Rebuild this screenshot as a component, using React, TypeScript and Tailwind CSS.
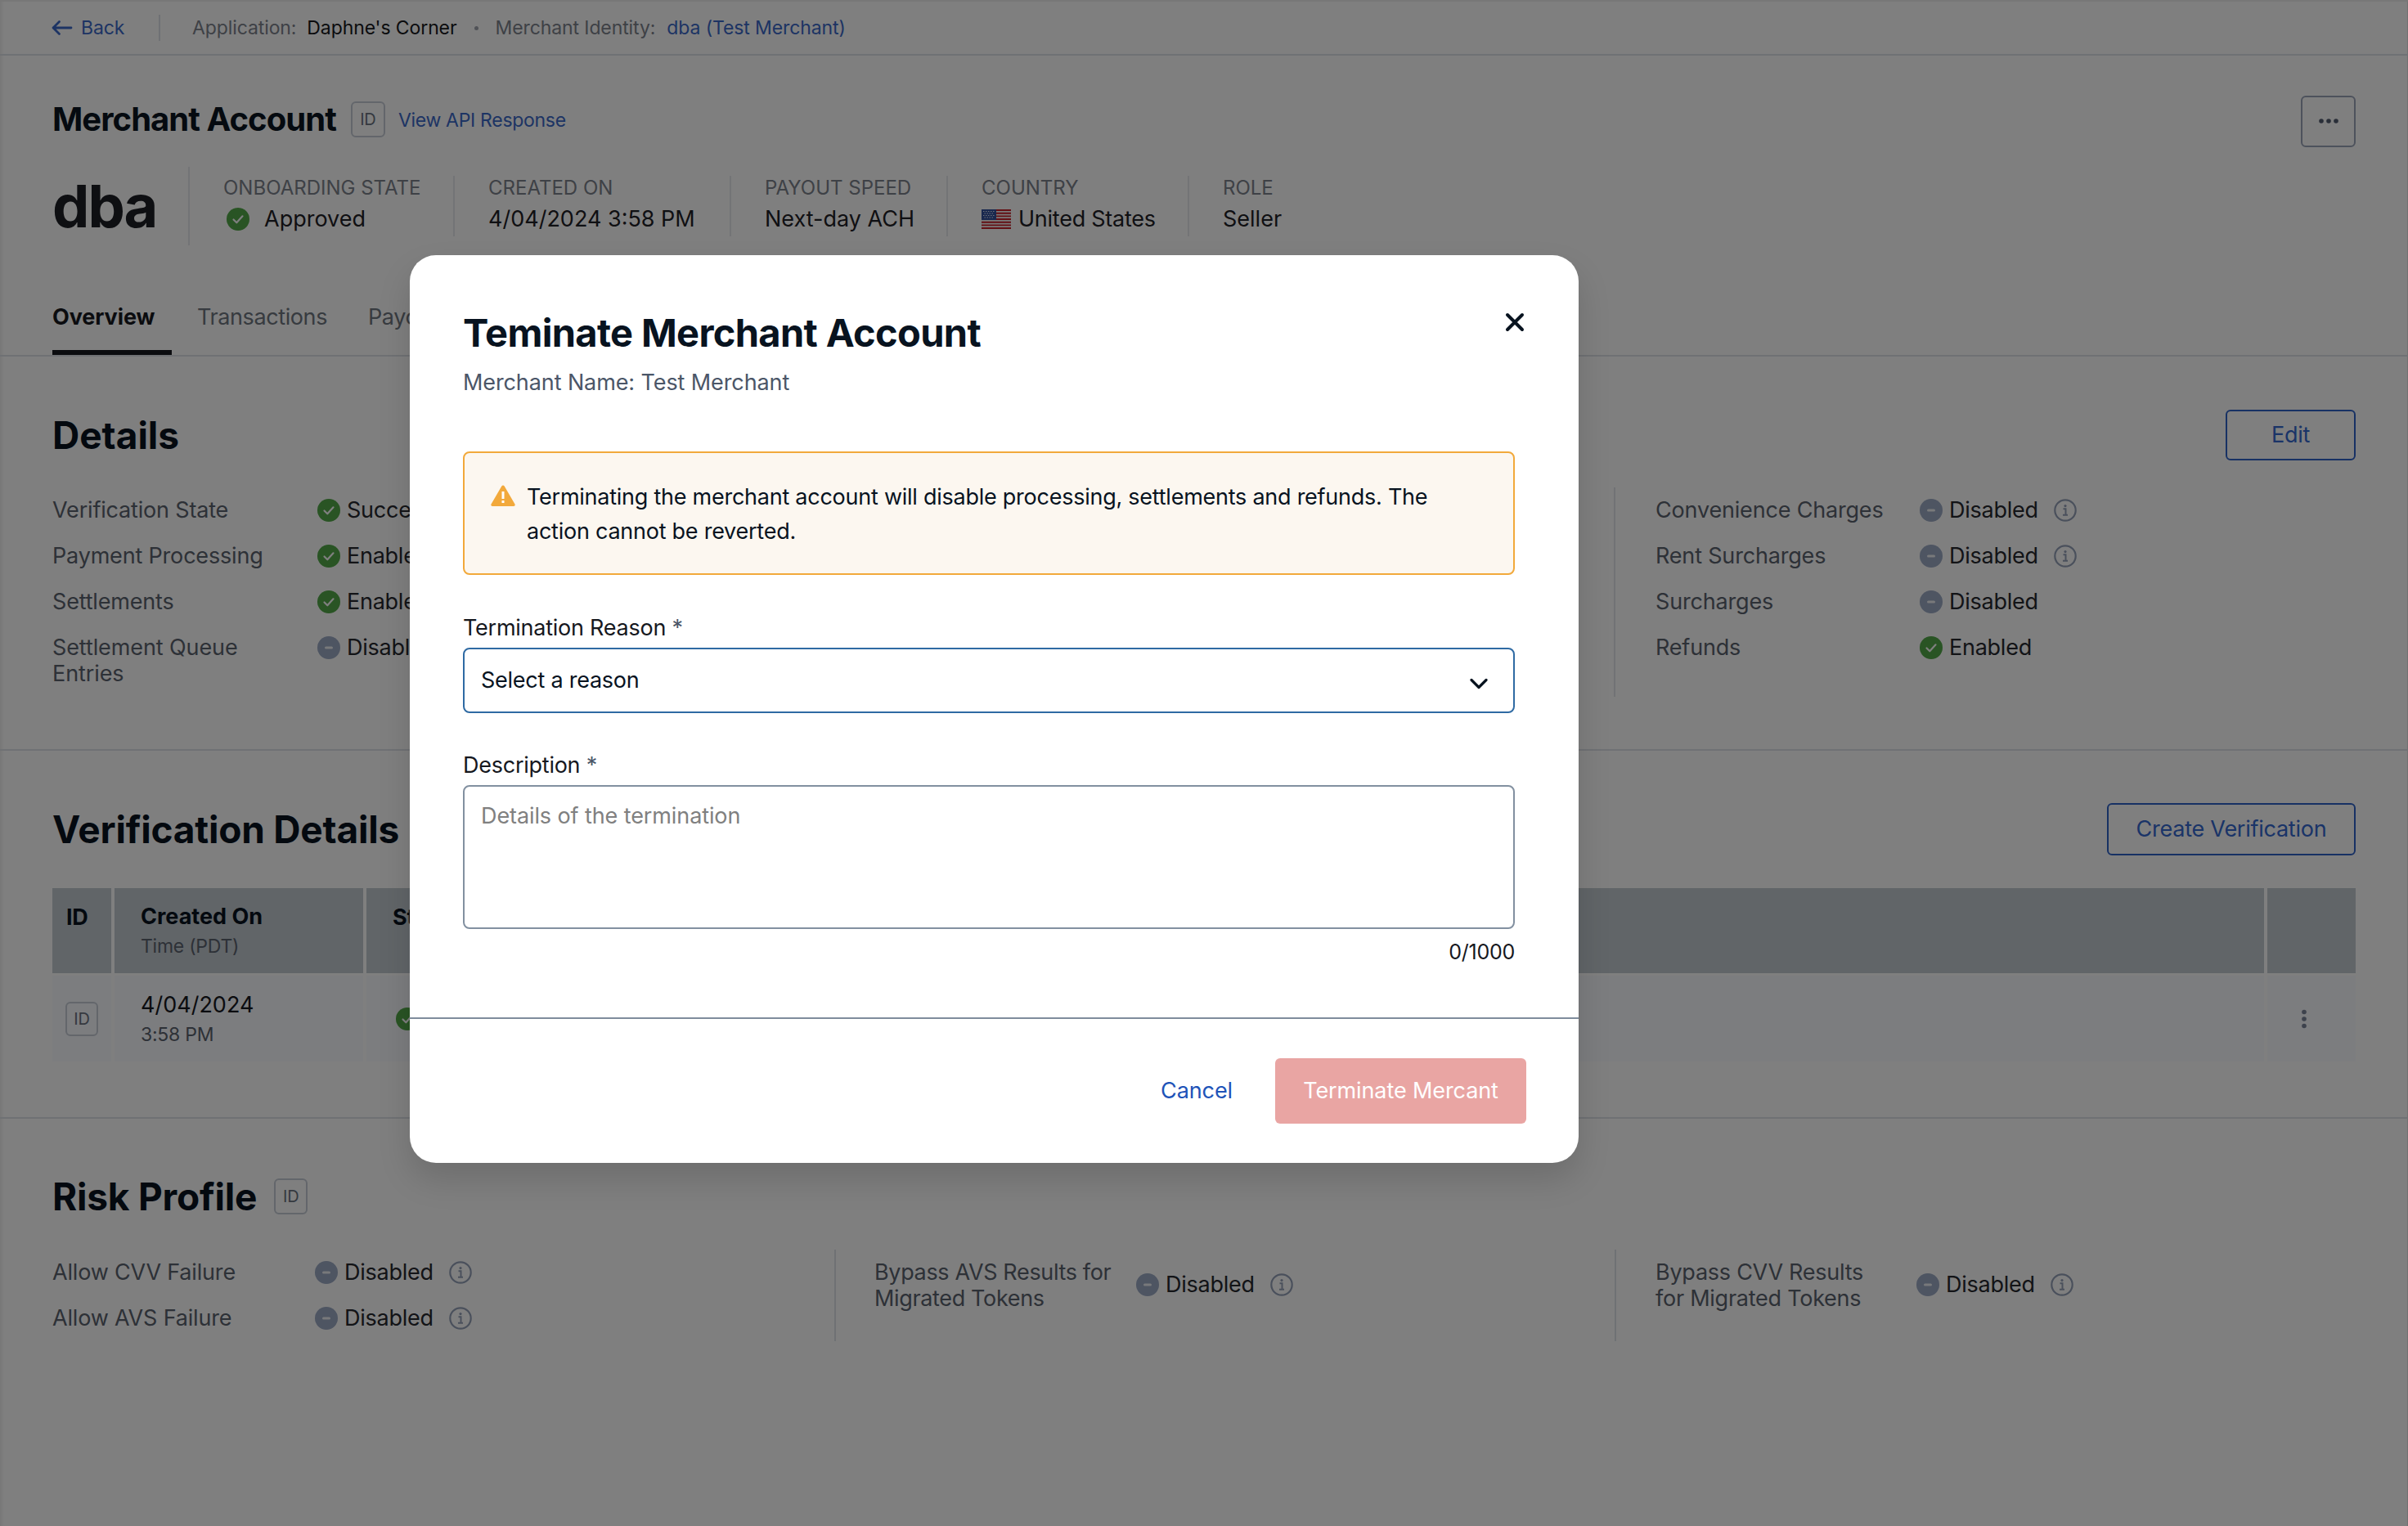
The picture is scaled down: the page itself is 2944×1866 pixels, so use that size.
import React from "react";

const Check = ({ size = 28 }: { size?: number }) => (
  <svg width={size} height={size} viewBox="0 0 28 28" className="shrink-0">
    <circle cx="14" cy="14" r="14" fill="#52a848" />
    <path d="M8.500 14.500l3.800 3.800 7.200-8" fill="none" stroke="#fff" strokeWidth="2.2" strokeLinecap="round" strokeLinejoin="round" />
  </svg>
);
const Minus = ({ size = 28 }: { size?: number }) => (
  <svg width={size} height={size} viewBox="0 0 28 28" className="shrink-0">
    <circle cx="14" cy="14" r="14" fill="#9caac4" />
    <rect x="9" y="12.500" width="10" height="3" rx="1.500" fill="#fff" fillOpacity="0.85" />
  </svg>
);
const Info = () => (
  <svg width="28" height="28" viewBox="0 0 28 28" className="shrink-0">
    <circle cx="14" cy="14" r="12.700" fill="none" stroke="#95a1b8" strokeWidth="2.2" />
    <circle cx="14" cy="8.600" r="1.600" fill="#95a1b8" />
    <path d="M11.500 12.300h3v7.300M11 19.800h6" fill="none" stroke="#95a1b8" strokeWidth="2" />
  </svg>
);
const IdBadge = ({ cls }: { cls: string }) => (
  <span className={`flex shrink-0 items-center justify-center rounded-[6px] border-2 border-[#c6ccd6] text-[20px] text-[#6a7280] ${cls}`}>ID</span>
);
const Status = ({ kind, text, info }: { kind: "ok" | "off"; text: string; info?: boolean }) => (
  <div className="flex h-[32px] items-center">
    {kind === "ok" ? <Check /> : <Minus />}
    <span className="ml-[8px] text-[27px] leading-[32px] whitespace-nowrap text-[#26282e]">{text}</span>
    {info && (
      <span className="ml-[19px]">
        <Info />
      </span>
    )}
  </div>
);
const Row = ({ label, lw, kind, text, info }: { label: string; lw: string; kind: "ok" | "off"; text: string; info?: boolean }) => (
  <div className="flex items-start">
    <div className={`${lw} shrink-0 text-[27px] leading-[32px] tracking-[-0.18px] text-[#5b626e]`}>{label}</div>
    <Status kind={kind} text={text} info={info} />
  </div>
);
const Stat = ({ label, w, last, children }: { label: string; w: string; last?: boolean; children: React.ReactNode }) => (
  <div className={`flex h-[74px] flex-col pl-[41px] ${w} ${last ? "" : "border-r-2 border-[#e7e9ed]"}`}>
    <div className="text-[24px] leading-[30px] tracking-normal whitespace-nowrap text-[#7c828c]">{label}</div>
    <div className="mt-[6px] flex h-[34px] items-center text-[27px] tracking-normal whitespace-nowrap text-[#1f2126]">{children}</div>
  </div>
);

const App = () => (
  <div className="relative h-[1866px] w-[2944px] overflow-hidden bg-white tracking-[-0.25px] shadow-[inset_6px_0_6px_-6px_rgba(0,0,0,0.14),inset_-1px_0_0_rgba(0,0,0,0.12)] [font-family:Inter,sans-serif]">
    {/* top bar */}
    <header className="flex h-[68px] items-center border-t-2 border-b-2 border-t-[#eeeeee] border-b-[#dfe2e8] pl-[63px] text-[23px] tracking-[-0.1px] whitespace-nowrap">
      <svg width="26" height="20" viewBox="0 0 26 20" fill="none" stroke="#3a68c8" strokeWidth="2.800" strokeLinecap="round" strokeLinejoin="round">
        <path d="M24 10H2M9.500 2.500L2 10l7.500 7.500" />
      </svg>
      <span className="ml-[10px] w-[95px] text-[#3a68c8]">Back</span>
      <span className="h-[32px] w-[2px] bg-[#dfe2e8]" />
      <span className="ml-[39px] text-[#7c828c]">Application:</span>
      <span className="ml-[13px] text-[#16181c]">Daphne's Corner</span>
      <span className="mx-[21px] h-[5px] w-[5px] rounded-full bg-[#a0a5ae]" />
      <span className="text-[#7c828c]">Merchant Identity:</span>
      <span className="ml-[14px] text-[#3a68c8]">dba (Test Merchant)</span>
    </header>

    {/* merchant overview */}
    <section className="flex h-[368px] flex-col border-b-2 border-[#dfe2e8] pl-[64px]">
      <div className="mt-[56px] flex h-[44px] items-center pr-[64px]">
        <h1 className="text-[40px] leading-[44px] font-bold tracking-[-0.95px] text-[#0a1420]">Merchant Account</h1>
        <IdBadge cls="ml-[18px] h-[44px] w-[42px]" />
        <span className="mt-[3px] ml-[16px] text-[23px] tracking-[-0.3px] text-[#3a68c8]">View API Response</span>
        <button className="mt-[4px] ml-auto flex h-[63px] w-[67px] items-center justify-center rounded-[6px] border-2 border-[#9aa4b8]">
          <svg width="24" height="6" viewBox="0 0 24 6" fill="#525c70">
            <circle cx="3" cy="3" r="2.800" />
            <circle cx="12" cy="3" r="2.800" />
            <circle cx="21" cy="3" r="2.800" />
          </svg>
        </button>
      </div>
      <div className="mt-[36px] flex h-[96px] items-center">
        <div className="flex h-[96px] w-[168px] shrink-0 items-center border-r-2 border-[#e7e9ed] text-[72px] leading-[96px] font-bold tracking-[-2px] text-[#1c1e24]">dba</div>
        <Stat label="ONBOARDING STATE" w="w-[324px]">
          <span className="ml-[4px]">
            <Check />
          </span>
          <span className="ml-[18px]">Approved</span>
        </Stat>
        <Stat label="CREATED ON" w="w-[338px]">4/04/2024 3:58 PM</Stat>
        <Stat label="PAYOUT SPEED" w="w-[265px]">Next-day ACH</Stat>
        <Stat label="COUNTRY" w="w-[295px]">
          <svg width="36" height="24" viewBox="0 0 36 24" className="mr-[9px] shrink-0">
            <rect width="36" height="24" fill="#f4f4f4" />
            <path d="M0 1h36M0 4.700h36M0 8.400h36M0 12h36M0 15.700h36M0 19.400h36M0 23h36" stroke="#c8202a" strokeWidth="1.900" />
            <rect width="18" height="13" fill="#33509c" />
            <path d="M2 2.500h14M3.500 5h12M2 7.500h14M3.500 10h12" stroke="#dfe4f2" strokeWidth="1" strokeDasharray="1.500 1.500" />
          </svg>
          <span className="tracking-[-0.25px]">United States</span>
        </Stat>
        <Stat label="ROLE" w="w-[200px]" last>Seller</Stat>
      </div>
      <nav className="mt-auto flex text-[27px] tracking-[-0.4px] whitespace-nowrap">
        <span className="h-[66px] w-[146px] border-b-[6px] border-[#16181e] font-bold tracking-[-0.1px] text-[#16181e]">Overview</span>
        <span className="ml-[31px] text-[#6f7680]">Transactions</span>
        <span className="ml-[50px] text-[#6f7680]">Payouts</span>
      </nav>
    </section>

    {/* details */}
    <section className="flex h-[482px] flex-col border-b-2 border-[#dfe2e8] pt-[65px] pl-[64px]">
      <div className="flex h-[62px] items-center pr-[64px]">
        <h2 className="text-[46px] font-bold tracking-normal text-[#08131f]">Details</h2>
        <button className="ml-auto h-[62px] w-[159px] rounded-[6px] border-2 border-[#2f62c8] text-[27px] text-[#3468d0]">Edit</button>
      </div>
      <div className="mt-[33px] flex h-[256px]">
        <div className="flex w-[956px] shrink-0 flex-col gap-[24px] pt-[12px]">
          <Row label="Verification State" lw="w-[324px]" kind="ok" text="Succeeded" />
          <Row label="Payment Processing" lw="w-[324px]" kind="ok" text="Enabled" />
          <Row label="Settlements" lw="w-[324px]" kind="ok" text="Enabled" />
          <div className="flex items-start">
            <div className="w-[324px] shrink-0 pr-[60px] text-[27px] leading-[32px] tracking-[-0.1px] text-[#5b626e]">Settlement Queue Entries</div>
            <Status kind="off" text="Disabled" />
          </div>
        </div>
        <div className="w-[953px] shrink-0" />
        <div className="flex flex-col gap-[24px] border-l-2 border-[#e2e5ea] pt-[12px] pl-[49px]">
          <Row label="Convenience Charges" lw="w-[323px]" kind="off" text="Disabled" info />
          <Row label="Rent Surcharges" lw="w-[323px]" kind="off" text="Disabled" info />
          <Row label="Surcharges" lw="w-[323px]" kind="off" text="Disabled" />
          <Row label="Refunds" lw="w-[323px]" kind="ok" text="Enabled" />
        </div>
      </div>
    </section>

    {/* verification details */}
    <section className="flex h-[450px] flex-col border-b-2 border-[#dfe2e8] pt-[64px] pl-[64px]">
      <div className="flex h-[64px] items-center pr-[64px]">
        <h2 className="text-[46px] font-bold tracking-[-0.2px] text-[#08131f]">Verification Details</h2>
        <button className="ml-auto h-[64px] w-[304px] rounded-[6px] border-2 border-[#2f62c8] text-[27px] text-[#3468d0]">Create Verification</button>
      </div>
      <div className="mt-[40px] w-[2816px]">
        <div className="flex h-[104px] gap-[4px] text-[27px]">
          <div className="w-[72px] bg-[#c3cad0] pt-[16px] pl-[17px] font-bold text-[#08131f]">ID</div>
          <div className="w-[304px] bg-[#c3cad0] pt-[17px] pl-[32px] leading-[36px]">
            <div className="font-bold tracking-normal text-[#08131f]">Created On</div>
            <div className="mt-[3px] text-[23px] leading-[30px] text-[#5b626e]">Time (PDT)</div>
          </div>
          <div className="w-[2320px] bg-[#c3cad0] pt-[16px] pl-[32px] font-bold text-[#08131f]">Status</div>
          <div className="w-[108px] bg-[#c3cad0]" />
        </div>
        <div className="mt-[3px] flex h-[105px] gap-[4px]">
          <div className="flex w-[72px] items-center justify-center bg-[#f8fafe]">
            <IdBadge cls="h-[42px] w-[40px]" />
          </div>
          <div className="flex w-[304px] flex-col justify-center bg-[#f8fafe] pt-[3px] pl-[32px]">
            <div className="text-[27px] leading-[36px] tracking-normal text-[#16181e]">4/04/2024</div>
            <div className="text-[23px] leading-[36px] text-[#5b626e]">3:58 PM</div>
          </div>
          <div className="flex w-[2320px] items-center bg-[#f8fafe] pl-[36px]">
            <Check />
          </div>
          <div className="flex w-[108px] items-center justify-center bg-[#f8fafe] pr-[18px]">
            <svg width="6" height="24" viewBox="0 0 6 24" fill="#7a8498">
              <circle cx="3" cy="3.500" r="2.800" />
              <circle cx="3" cy="12" r="2.800" />
              <circle cx="3" cy="20.500" r="2.800" />
            </svg>
          </div>
        </div>
      </div>
    </section>

    {/* risk profile */}
    <section className="flex flex-col pt-[73px] pl-[64px]">
      <div className="flex h-[44px] items-center">
        <h2 className="text-[46px] leading-[44px] font-bold tracking-[-0.2px] text-[#08131f]">Risk Profile</h2>
        <IdBadge cls="ml-[21px] h-[44px] w-[41px]" />
      </div>
      <div className="mt-[43px] flex h-[112px]">
        <div className="flex w-[956px] shrink-0 flex-col gap-[24px] pt-[12px]">
          <Row label="Allow CVV Failure" lw="w-[321px]" kind="off" text="Disabled" info />
          <Row label="Allow AVS Failure" lw="w-[321px]" kind="off" text="Disabled" info />
        </div>
        <div className="flex w-[954px] shrink-0 items-start border-l-2 border-[#dfe3e9] pt-[12px] pl-[47px]">
          <div className="w-[320px] shrink-0 text-[27px] leading-[32px] tracking-[-0.35px] text-[#5b626e]">Bypass AVS Results for Migrated Tokens</div>
          <div className="mt-[15px]">
            <Status kind="off" text="Disabled" info />
          </div>
        </div>
        <div className="flex items-start border-l-2 border-[#dfe3e9] pt-[12px] pl-[48px]">
          <div className="w-[319px] shrink-0 pr-[50px] text-[27px] leading-[32px] text-[#5b626e]">Bypass CVV Results for Migrated Tokens</div>
          <div className="mt-[15px]">
            <Status kind="off" text="Disabled" info />
          </div>
        </div>
      </div>
    </section>

    {/* overlay */}
    <div className="absolute inset-0 bg-black/50" />

    {/* modal */}
    <div className="absolute top-[312px] left-[501px] flex h-[1110px] w-[1429px] flex-col rounded-[32px] bg-white shadow-[0_20px_40px_rgba(0,0,0,0.14)]">
      <div className="relative px-[65px] pt-[70px]">
        <h2 className="text-[47px] leading-[50px] font-bold tracking-[-0.65px] text-[#08131f]">Teminate Merchant Account</h2>
        <p className="mt-[18px] text-[27px] leading-[36px] tracking-[-0.1px] text-[#4b5668]">Merchant Name: Test Merchant</p>
        <button className="absolute top-[70px] right-[66px]" aria-label="Close">
          <svg width="24" height="24" viewBox="0 0 24 24" fill="none" stroke="#08131f" strokeWidth="4" strokeLinecap="round" className="block">
            <path d="M3 3l18 18M21 3L3 21" />
          </svg>
        </button>
      </div>
      <div className="mt-[66px] mr-[78px] ml-[65px] flex h-[151px] rounded-[8px] border-2 border-[#f2a93b] bg-[#fcf7f0] pt-[33px] pl-[32px] text-[27px] leading-[42px] text-[#08131f]">
        <svg width="30" height="26" viewBox="0 0 30 26" className="mt-[6px] shrink-0">
          <path d="M15 0.500a2 2 0 0 1 1.700 1L29.500 23.500a1.700 1.700 0 0 1-1.500 2.500H2a1.700 1.700 0 0 1-1.500-2.500L13.300 1.500a2 2 0 0 1 1.700-1z" fill="#f2a93b" />
          <rect x="13.500" y="8" width="3" height="9" fill="#fff" />
          <rect x="13.500" y="19" width="3" height="3" fill="#fff" />
        </svg>
        <p className="ml-[14px] w-[1160px]">Terminating the merchant account will disable processing, settlements and refunds. The action cannot be reverted.</p>
      </div>
      <div className="mt-[49px] mr-[78px] ml-[65px]">
        <label className="block text-[27px] leading-[32px] text-[#16181e]">
          Termination Reason <span className="text-[#4b5668]">*</span>
        </label>
        <div className="mt-[8px] flex h-[80px] items-center justify-between rounded-[8px] border-2 border-[#2f6aa3] pr-[31px] pl-[20px] text-[27px] text-[#08131f]">
          <span>Select a reason</span>
          <svg width="22" height="14" viewBox="0 0 22 14" fill="none" stroke="#08131f" strokeWidth="3.200" strokeLinecap="round" strokeLinejoin="round" className="mt-[8px]">
            <path d="M2 2.500l9 9 9-9" />
          </svg>
        </div>
        <label className="mt-[48px] block text-[27px] leading-[32px] text-[#16181e]">
          Description <span className="text-[#4b5668]">*</span>
        </label>
        <textarea
          placeholder="Details of the termination"
          className="mt-[8px] block h-[176px] w-full resize-none rounded-[8px] border-2 border-[#8290a0] px-[20px] py-[19px] text-[27px] leading-[34px] tracking-[-0.1px] placeholder-[#808080] outline-none"
        />
        <div className="mt-[13px] text-right text-[25px] leading-[30px] text-[#16181e]">0/1000</div>
      </div>
      <div className="mt-[65px] h-[2px] bg-[#7f8c9c]" />
      <div className="mt-[48px] flex items-center justify-end pr-[64px]">
        <button className="text-[27px] tracking-[-0.1px] text-[#2053b8]">Cancel</button>
        <button className="ml-[52px] h-[80px] w-[307px] rounded-[6px] bg-[#e9a5a3] text-[27px] tracking-[-0.1px] text-white">Terminate Mercant</button>
      </div>
    </div>
  </div>
);

export default App;
